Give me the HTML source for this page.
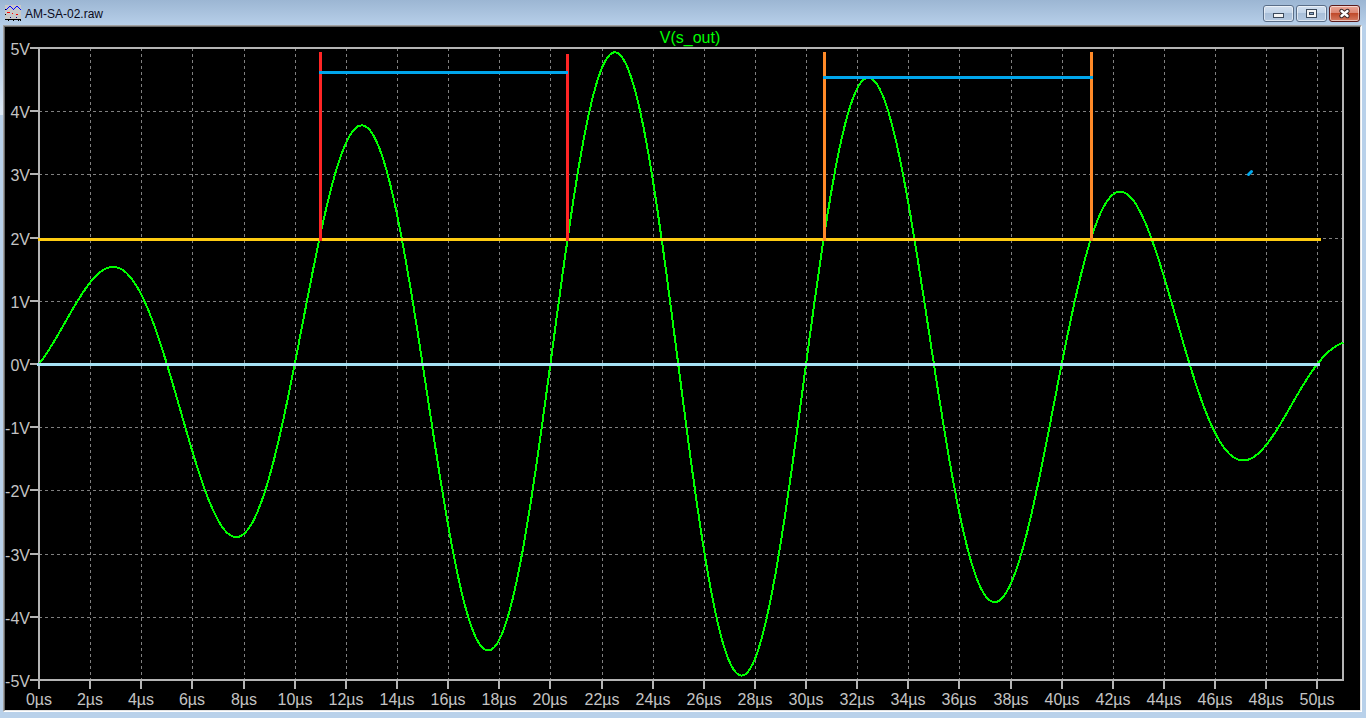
<!DOCTYPE html>
<html><head><meta charset="utf-8"><style>
html,body{margin:0;padding:0;}
body{width:1366px;height:718px;overflow:hidden;position:relative;background:#b9d1ea;font-family:"Liberation Sans",sans-serif;}
#tb{position:absolute;left:0;top:0;width:1366px;height:25px;background:linear-gradient(#9cb6d3,#b7cfe9);}
#ttl{position:absolute;left:25px;top:7px;font-size:12px;color:#0a0a20;white-space:nowrap;}
.btn{position:absolute;top:5px;height:15px;width:29px;border:1px solid #5a6e88;border-radius:3px;box-shadow:inset 0 0 0 1px rgba(255,255,255,0.55);
 background:linear-gradient(#d3e0ef 0%,#c2d4e9 45%,#a9bfd9 50%,#b4c9e1 100%);}
#cls{border-color:#5b1b1b;background:linear-gradient(#eaa696 0%,#dc8673 45%,#c04a2b 50%,#d47a62 100%);}
#client{position:absolute;left:3px;top:25px;width:1355px;height:683px;border-style:solid;border-width:2px;border-color:#a0a0a0 #ffffff #ffffff #a0a0a0;background:#000;}
svg{position:absolute;left:0;top:0;}
</style></head><body>
<div id="tb"></div>
<svg width="16" height="16" style="left:5px;top:5px" shape-rendering="crispEdges"><rect x="0" y="0" width="16" height="14" fill="#c8c8c8"/><rect x="0" y="4" width="1" height="1" fill="#000"/><rect x="1" y="4" width="1" height="1" fill="#0000ff"/><rect x="2" y="3" width="1" height="1" fill="#0000ff"/><rect x="3" y="2" width="1" height="1" fill="#0000ff"/><rect x="4" y="1" width="1" height="1" fill="#0000ff"/><rect x="5" y="1" width="1" height="1" fill="#0000ff"/><rect x="6" y="2" width="1" height="1" fill="#0000ff"/><rect x="7" y="3" width="1" height="1" fill="#0000ff"/><rect x="8" y="4" width="1" height="1" fill="#0000ff"/><rect x="9" y="3" width="1" height="1" fill="#0000ff"/><rect x="10" y="2" width="1" height="1" fill="#0000ff"/><rect x="11" y="1" width="1" height="1" fill="#0000ff"/><rect x="12" y="1" width="1" height="1" fill="#0000ff"/><rect x="13" y="2" width="1" height="1" fill="#0000ff"/><rect x="14" y="3" width="1" height="1" fill="#0000ff"/><rect x="15" y="4" width="1" height="1" fill="#0000ff"/><rect x="2" y="7" width="3" height="1" fill="#ff0000"/><rect x="7" y="8" width="1" height="1" fill="#ff0000"/><rect x="11" y="9" width="2" height="1" fill="#ff0000"/><rect x="0" y="9" width="1" height="1" fill="#000"/><rect x="5" y="12" width="1" height="1" fill="#000080"/><rect x="11" y="12" width="1" height="1" fill="#000080"/><rect x="0" y="14" width="16" height="1" fill="#000"/><rect x="3" y="15" width="1" height="1" fill="#000"/><rect x="8" y="15" width="1" height="1" fill="#000"/><rect x="13" y="15" width="1" height="1" fill="#000"/><rect x="15" y="15" width="1" height="1" fill="#000"/></svg>
<div id="ttl">AM-SA-02.raw</div>
<div class="btn" style="left:1263px"></div>
<div class="btn" style="left:1296px"></div>
<div class="btn" id="cls" style="left:1329px"></div>
<div style="position:absolute;left:0;top:60px;width:3px;height:55px;background:linear-gradient(#b9d1ea,#dfeaf5);"></div>
<div id="client"></div>
<div style="position:absolute;left:4px;top:26px;width:1357px;height:685px;border-style:solid;border-width:1px;border-color:#696969 #e3e3e3 #e3e3e3 #696969;box-sizing:border-box;"></div>
<svg width="110" height="20" style="left:1256px;top:3px" shape-rendering="crispEdges">
<rect x="17.5" y="10.5" width="10" height="4" rx="1" fill="#f4f4f4" stroke="#3c4a5c"/>
<rect x="50.5" y="6.5" width="10" height="8" rx="1" fill="none" stroke="#3c4a5c"/>
<rect x="51.5" y="7.5" width="8" height="6" fill="none" stroke="#f4f4f4" stroke-width="1"/>
<rect x="52.5" y="8.5" width="6" height="4" fill="none" stroke="#f4f4f4" stroke-width="1"/>
<rect x="53.5" y="9.5" width="4" height="2" fill="#8aa6c6" stroke="#3c4a5c"/>
</svg>
<svg width="16" height="14" style="left:1336px;top:6px">
<path d="M5.5,5 L11.5,10 M11.5,5 L5.5,10" stroke="#3a2828" stroke-width="4.4" stroke-linecap="round"/>
<path d="M5.5,5 L11.5,10 M11.5,5 L5.5,10" stroke="#ffffff" stroke-width="2.4" stroke-linecap="round"/>
</svg>
<svg width="1366" height="718" viewBox="0 0 1366 718">
<g stroke="#808080" stroke-width="1" shape-rendering="crispEdges" stroke-dasharray="3 3" id="gv">
<line x1="90.5" y1="48" x2="90.5" y2="679" />
<line x1="141.5" y1="48" x2="141.5" y2="679" />
<line x1="192.5" y1="48" x2="192.5" y2="679" />
<line x1="244.5" y1="48" x2="244.5" y2="679" />
<line x1="295.5" y1="48" x2="295.5" y2="679" />
<line x1="346.5" y1="48" x2="346.5" y2="679" />
<line x1="397.5" y1="48" x2="397.5" y2="679" />
<line x1="448.5" y1="48" x2="448.5" y2="679" />
<line x1="499.5" y1="48" x2="499.5" y2="679" />
<line x1="550.5" y1="48" x2="550.5" y2="679" />
<line x1="602.5" y1="48" x2="602.5" y2="679" />
<line x1="653.5" y1="48" x2="653.5" y2="679" />
<line x1="704.5" y1="48" x2="704.5" y2="679" />
<line x1="755.5" y1="48" x2="755.5" y2="679" />
<line x1="806.5" y1="48" x2="806.5" y2="679" />
<line x1="857.5" y1="48" x2="857.5" y2="679" />
<line x1="908.5" y1="48" x2="908.5" y2="679" />
<line x1="959.5" y1="48" x2="959.5" y2="679" />
<line x1="1011.5" y1="48" x2="1011.5" y2="679" />
<line x1="1062.5" y1="48" x2="1062.5" y2="679" />
<line x1="1113.5" y1="48" x2="1113.5" y2="679" />
<line x1="1164.5" y1="48" x2="1164.5" y2="679" />
<line x1="1215.5" y1="48" x2="1215.5" y2="679" />
<line x1="1266.5" y1="48" x2="1266.5" y2="679" />
<line x1="1317.5" y1="48" x2="1317.5" y2="679" />
<line x1="39" y1="111.5" x2="1342" y2="111.5" />
<line x1="39" y1="174.5" x2="1342" y2="174.5" />
<line x1="39" y1="238.5" x2="1342" y2="238.5" />
<line x1="39" y1="301.5" x2="1342" y2="301.5" />
<line x1="39" y1="427.5" x2="1342" y2="427.5" />
<line x1="39" y1="490.5" x2="1342" y2="490.5" />
<line x1="39" y1="554.5" x2="1342" y2="554.5" />
<line x1="39" y1="617.5" x2="1342" y2="617.5" />
</g>
<g fill="#b4b4b4" shape-rendering="crispEdges">
<rect x="38" y="47" width="1306" height="2"/>
<rect x="38" y="679" width="1306" height="2"/>
<rect x="38" y="47" width="2" height="634"/>
<rect x="1342" y="47" width="2" height="634"/>
<rect x="30" y="679" width="9" height="2"/>
<rect x="30" y="616" width="9" height="2"/>
<rect x="30" y="553" width="9" height="2"/>
<rect x="30" y="489" width="9" height="2"/>
<rect x="30" y="426" width="9" height="2"/>
<rect x="30" y="363" width="9" height="2"/>
<rect x="30" y="300" width="9" height="2"/>
<rect x="30" y="237" width="9" height="2"/>
<rect x="30" y="173" width="9" height="2"/>
<rect x="30" y="110" width="9" height="2"/>
<rect x="30" y="47" width="9" height="2"/>
<rect x="38" y="679" width="2" height="10"/>
<rect x="89" y="679" width="2" height="10"/>
<rect x="140" y="679" width="2" height="10"/>
<rect x="191" y="679" width="2" height="10"/>
<rect x="243" y="679" width="2" height="10"/>
<rect x="294" y="679" width="2" height="10"/>
<rect x="345" y="679" width="2" height="10"/>
<rect x="396" y="679" width="2" height="10"/>
<rect x="447" y="679" width="2" height="10"/>
<rect x="498" y="679" width="2" height="10"/>
<rect x="549" y="679" width="2" height="10"/>
<rect x="601" y="679" width="2" height="10"/>
<rect x="652" y="679" width="2" height="10"/>
<rect x="703" y="679" width="2" height="10"/>
<rect x="754" y="679" width="2" height="10"/>
<rect x="805" y="679" width="2" height="10"/>
<rect x="856" y="679" width="2" height="10"/>
<rect x="907" y="679" width="2" height="10"/>
<rect x="958" y="679" width="2" height="10"/>
<rect x="1010" y="679" width="2" height="10"/>
<rect x="1061" y="679" width="2" height="10"/>
<rect x="1112" y="679" width="2" height="10"/>
<rect x="1163" y="679" width="2" height="10"/>
<rect x="1214" y="679" width="2" height="10"/>
<rect x="1265" y="679" width="2" height="10"/>
<rect x="1316" y="679" width="2" height="10"/>
</g>
<polyline points="39.1,364.0 40.6,362.0 42.1,359.9 43.7,357.7 45.2,355.4 46.7,353.1 48.3,350.8 49.8,348.4 51.3,345.9 52.9,343.4 54.4,340.8 55.9,338.3 57.5,335.6 59.0,333.0 60.5,330.3 62.1,327.7 63.6,325.0 65.1,322.3 66.7,319.6 68.2,316.9 69.7,314.2 71.3,311.6 72.8,308.9 74.3,306.3 75.9,303.8 77.4,301.2 78.9,298.8 80.5,296.3 82.0,293.9 83.5,291.6 85.1,289.4 86.6,287.2 88.1,285.1 89.7,283.1 91.2,281.2 92.7,279.4 94.3,277.7 95.8,276.1 97.3,274.6 98.9,273.3 100.4,272.0 101.9,270.9 103.5,269.9 105.0,269.0 106.5,268.3 108.1,267.7 109.6,267.3 111.1,267.0 112.7,266.9 114.2,266.9 115.8,267.1 117.3,267.5 118.8,268.0 120.4,268.7 121.9,269.5 123.4,270.5 125.0,271.7 126.5,273.0 128.0,274.6 129.6,276.3 131.1,278.1 132.6,280.1 134.2,282.3 135.7,284.7 137.2,287.2 138.8,289.9 140.3,292.7 141.8,295.8 143.4,298.9 144.9,302.2 146.4,305.7 148.0,309.3 149.5,313.1 151.0,317.0 152.6,321.0 154.1,325.1 155.6,329.4 157.2,333.8 158.7,338.3 160.2,342.9 161.8,347.6 163.3,352.5 164.8,357.4 166.4,362.3 167.9,367.4 169.4,372.5 171.0,377.7 172.5,382.9 174.0,388.1 175.6,393.4 177.1,398.8 178.6,404.1 180.2,409.5 181.7,414.8 183.2,420.2 184.8,425.5 186.3,430.8 187.9,436.1 189.4,441.3 190.9,446.5 192.5,451.6 194.0,456.7 195.5,461.6 197.1,466.5 198.6,471.3 200.1,476.0 201.7,480.5 203.2,485.0 204.7,489.3 206.3,493.5 207.8,497.5 209.3,501.4 210.9,505.1 212.4,508.7 213.9,512.0 215.5,515.2 217.0,518.2 218.5,521.0 220.1,523.6 221.6,526.0 223.1,528.1 224.7,530.1 226.2,531.8 227.7,533.3 229.3,534.5 230.8,535.5 232.3,536.3 233.9,536.8 235.4,537.0 236.9,537.0 238.5,536.8 240.0,536.3 241.5,535.5 243.1,534.4 244.6,533.1 246.1,531.6 247.7,529.7 249.2,527.6 250.7,525.3 252.3,522.7 253.8,519.8 255.3,516.7 256.9,513.3 258.4,509.6 259.9,505.7 261.5,501.6 263.0,497.2 264.6,492.6 266.1,487.8 267.6,482.7 269.2,477.4 270.7,471.9 272.2,466.2 273.8,460.3 275.3,454.2 276.8,447.9 278.4,441.5 279.9,434.8 281.4,428.1 283.0,421.1 284.5,414.0 286.0,406.8 287.6,399.5 289.1,392.1 290.6,384.5 292.2,376.9 293.7,369.2 295.2,361.4 296.8,353.6 298.3,345.7 299.8,337.8 301.4,329.8 302.9,321.9 304.4,314.0 306.0,306.0 307.5,298.1 309.0,290.3 310.6,282.4 312.1,274.7 313.6,267.0 315.2,259.4 316.7,251.9 318.2,244.6 319.8,237.3 321.3,230.2 322.8,223.2 324.4,216.4 325.9,209.7 327.4,203.3 329.0,197.0 330.5,190.9 332.0,185.0 333.6,179.4 335.1,174.0 336.6,168.8 338.2,163.9 339.7,159.2 341.3,154.9 342.8,150.7 344.3,146.9 345.9,143.4 347.4,140.1 348.9,137.2 350.5,134.6 352.0,132.3 353.5,130.3 355.1,128.6 356.6,127.3 358.1,126.3 359.7,125.7 361.2,125.4 362.7,125.4 364.3,125.8 365.8,126.6 367.3,127.7 368.9,129.1 370.4,130.9 371.9,133.0 373.5,135.5 375.0,138.3 376.5,141.5 378.1,145.0 379.6,148.9 381.1,153.0 382.7,157.6 384.2,162.4 385.7,167.5 387.3,173.0 388.8,178.8 390.3,184.8 391.9,191.2 393.4,197.8 394.9,204.7 396.5,211.9 398.0,219.3 399.5,227.0 401.1,234.9 402.6,243.1 404.1,251.4 405.7,260.0 407.2,268.8 408.7,277.7 410.3,286.8 411.8,296.0 413.4,305.4 414.9,315.0 416.4,324.6 418.0,334.3 419.5,344.1 421.0,354.0 422.6,364.0 424.1,374.0 425.6,384.0 427.2,394.1 428.7,404.1 430.2,414.1 431.8,424.1 433.3,434.1 434.8,444.0 436.4,453.8 437.9,463.5 439.4,473.2 441.0,482.7 442.5,492.0 444.0,501.3 445.6,510.3 447.1,519.2 448.6,527.9 450.2,536.4 451.7,544.7 453.2,552.8 454.8,560.6 456.3,568.1 457.8,575.4 459.4,582.4 460.9,589.2 462.4,595.6 464.0,601.7 465.5,607.5 467.0,612.9 468.6,618.1 470.1,622.8 471.6,627.3 473.2,631.3 474.7,635.0 476.2,638.3 477.8,641.2 479.3,643.7 480.8,645.9 482.4,647.6 483.9,648.9 485.4,649.9 487.0,650.4 488.5,650.5 490.1,650.2 491.6,649.5 493.1,648.3 494.7,646.8 496.2,644.8 497.7,642.5 499.3,639.7 500.8,636.5 502.3,633.0 503.9,629.0 505.4,624.6 506.9,619.9 508.5,614.7 510.0,609.2 511.5,603.3 513.1,597.1 514.6,590.5 516.1,583.6 517.7,576.3 519.2,568.7 520.7,560.8 522.3,552.6 523.8,544.1 525.3,535.3 526.9,526.2 528.4,516.9 529.9,507.4 531.5,497.6 533.0,487.6 534.5,477.4 536.1,467.1 537.6,456.5 539.1,445.8 540.7,435.0 542.2,424.0 543.7,412.9 545.3,401.7 546.8,390.5 548.3,379.2 549.9,367.8 551.4,356.4 552.9,345.0 554.5,333.6 556.0,322.2 557.5,310.9 559.1,299.6 560.6,288.4 562.1,277.3 563.7,266.2 565.2,255.3 566.8,244.6 568.3,234.0 569.8,223.5 571.4,213.3 572.9,203.2 574.4,193.4 576.0,183.8 577.5,174.4 579.0,165.3 580.6,156.4 582.1,147.9 583.6,139.6 585.2,131.6 586.7,124.0 588.2,116.7 589.8,109.8 591.3,103.2 592.8,96.9 594.4,91.1 595.9,85.6 597.4,80.5 599.0,75.8 600.5,71.6 602.0,67.7 603.6,64.3 605.1,61.2 606.6,58.7 608.2,56.5 609.7,54.8 611.2,53.5 612.8,52.7 614.3,52.3 615.8,52.4 617.4,52.9 618.9,53.9 620.4,55.3 622.0,57.1 623.5,59.4 625.0,62.2 626.6,65.3 628.1,68.9 629.6,73.0 631.2,77.4 632.7,82.3 634.2,87.5 635.8,93.2 637.3,99.2 638.9,105.7 640.4,112.5 641.9,119.7 643.5,127.2 645.0,135.1 646.5,143.3 648.1,151.8 649.6,160.7 651.1,169.8 652.7,179.2 654.2,188.9 655.7,198.8 657.3,209.0 658.8,219.4 660.3,230.0 661.9,240.8 663.4,251.8 664.9,263.0 666.5,274.3 668.0,285.7 669.5,297.3 671.1,308.9 672.6,320.6 674.1,332.4 675.7,344.2 677.2,356.1 678.7,368.0 680.3,379.8 681.8,391.7 683.3,403.5 684.9,415.2 686.4,426.9 687.9,438.4 689.5,449.9 691.0,461.3 692.5,472.5 694.1,483.5 695.6,494.4 697.1,505.0 698.7,515.5 700.2,525.8 701.7,535.8 703.3,545.6 704.8,555.1 706.3,564.3 707.9,573.2 709.4,581.8 710.9,590.2 712.5,598.1 714.0,605.8 715.6,613.1 717.1,620.0 718.6,626.6 720.2,632.8 721.7,638.6 723.2,644.0 724.8,649.0 726.3,653.5 727.8,657.7 729.4,661.4 730.9,664.7 732.4,667.6 734.0,670.0 735.5,672.0 737.0,673.6 738.6,674.7 740.1,675.4 741.6,675.6 743.2,675.4 744.7,674.7 746.2,673.6 747.8,672.0 749.3,670.0 750.8,667.5 752.4,664.7 753.9,661.4 755.4,657.7 757.0,653.5 758.5,649.0 760.0,644.0 761.6,638.7 763.1,632.9 764.6,626.8 766.2,620.4 767.7,613.5 769.2,606.3 770.8,598.8 772.3,591.0 773.8,582.8 775.4,574.4 776.9,565.6 778.4,556.6 780.0,547.3 781.5,537.8 783.0,528.0 784.6,518.0 786.1,507.8 787.6,497.4 789.2,486.9 790.7,476.2 792.3,465.3 793.8,454.4 795.3,443.3 796.9,432.1 798.4,420.8 799.9,409.5 801.5,398.2 803.0,386.8 804.5,375.4 806.1,364.0 807.6,352.6 809.1,341.3 810.7,330.0 812.2,318.8 813.7,307.7 815.3,296.7 816.8,285.9 818.3,275.1 819.9,264.5 821.4,254.1 822.9,243.8 824.5,233.8 826.0,224.0 827.5,214.3 829.1,205.0 830.6,195.8 832.1,187.0 833.7,178.4 835.2,170.1 836.7,162.1 838.3,154.4 839.8,147.0 841.3,140.0 842.9,133.3 844.4,127.0 845.9,121.0 847.5,115.3 849.0,110.1 850.5,105.2 852.1,100.7 853.6,96.6 855.1,92.9 856.7,89.6 858.2,86.7 859.7,84.2 861.3,82.1 862.8,80.4 864.3,79.2 865.9,78.3 867.4,77.9 869.0,77.9 870.5,78.2 872.0,79.0 873.6,80.2 875.1,81.8 876.6,83.8 878.2,86.2 879.7,89.0 881.2,92.2 882.8,95.8 884.3,99.7 885.8,104.0 887.4,108.6 888.9,113.6 890.4,119.0 892.0,124.7 893.5,130.7 895.0,137.0 896.6,143.6 898.1,150.5 899.6,157.7 901.2,165.2 902.7,172.9 904.2,180.8 905.8,189.0 907.3,197.5 908.8,206.1 910.4,214.9 911.9,223.9 913.4,233.1 915.0,242.4 916.5,251.8 918.0,261.4 919.6,271.1 921.1,280.9 922.6,290.7 924.2,300.6 925.7,310.6 927.2,320.6 928.8,330.6 930.3,340.7 931.8,350.7 933.4,360.7 934.9,370.6 936.4,380.5 938.0,390.4 939.5,400.1 941.1,409.8 942.6,419.3 944.1,428.7 945.7,438.0 947.2,447.2 948.7,456.1 950.3,464.9 951.8,473.5 953.3,481.9 954.9,490.1 956.4,498.1 957.9,505.9 959.5,513.4 961.0,520.6 962.5,527.6 964.1,534.3 965.6,540.8 967.1,546.9 968.7,552.8 970.2,558.3 971.7,563.6 973.3,568.5 974.8,573.1 976.3,577.4 977.9,581.3 979.4,584.9 980.9,588.2 982.5,591.1 984.0,593.7 985.5,596.0 987.1,597.9 988.6,599.4 990.1,600.6 991.7,601.5 993.2,602.0 994.7,602.1 996.3,601.9 997.8,601.4 999.3,600.5 1000.9,599.3 1002.4,597.8 1003.9,595.9 1005.5,593.7 1007.0,591.2 1008.5,588.4 1010.1,585.2 1011.6,581.8 1013.1,578.1 1014.7,574.1 1016.2,569.8 1017.8,565.2 1019.3,560.4 1020.8,555.3 1022.4,550.0 1023.9,544.4 1025.4,538.6 1027.0,532.6 1028.5,526.4 1030.0,520.1 1031.6,513.5 1033.1,506.7 1034.6,499.8 1036.2,492.8 1037.7,485.6 1039.2,478.2 1040.8,470.8 1042.3,463.3 1043.8,455.6 1045.4,447.9 1046.9,440.1 1048.4,432.3 1050.0,424.4 1051.5,416.5 1053.0,408.6 1054.6,400.7 1056.1,392.8 1057.6,384.9 1059.2,377.0 1060.7,369.2 1062.2,361.4 1063.8,353.7 1065.3,346.1 1066.8,338.5 1068.4,331.1 1069.9,323.7 1071.4,316.5 1073.0,309.4 1074.5,302.4 1076.0,295.6 1077.6,289.0 1079.1,282.5 1080.6,276.1 1082.2,270.0 1083.7,264.1 1085.2,258.3 1086.8,252.7 1088.3,247.4 1089.8,242.3 1091.4,237.4 1092.9,232.7 1094.5,228.3 1096.0,224.1 1097.5,220.1 1099.1,216.4 1100.6,213.0 1102.1,209.7 1103.7,206.8 1105.2,204.1 1106.7,201.7 1108.3,199.5 1109.8,197.6 1111.3,196.0 1112.9,194.6 1114.4,193.4 1115.9,192.6 1117.5,192.0 1119.0,191.7 1120.5,191.6 1122.1,191.8 1123.6,192.2 1125.1,192.9 1126.7,193.8 1128.2,194.9 1129.7,196.3 1131.3,198.0 1132.8,199.8 1134.3,201.9 1135.9,204.2 1137.4,206.7 1138.9,209.5 1140.5,212.4 1142.0,215.5 1143.5,218.8 1145.1,222.3 1146.6,225.9 1148.1,229.7 1149.7,233.7 1151.2,237.8 1152.7,242.1 1154.3,246.5 1155.8,251.0 1157.3,255.6 1158.9,260.3 1160.4,265.2 1161.9,270.1 1163.5,275.1 1165.0,280.2 1166.6,285.3 1168.1,290.5 1169.6,295.7 1171.2,301.0 1172.7,306.3 1174.2,311.6 1175.8,317.0 1177.3,322.3 1178.8,327.6 1180.4,332.9 1181.9,338.2 1183.4,343.5 1185.0,348.7 1186.5,353.8 1188.0,359.0 1189.6,364.0 1191.1,369.0 1192.6,373.9 1194.2,378.7 1195.7,383.4 1197.2,388.0 1198.8,392.5 1200.3,396.9 1201.8,401.2 1203.4,405.4 1204.9,409.5 1206.4,413.4 1208.0,417.1 1209.5,420.8 1211.0,424.3 1212.6,427.6 1214.1,430.8 1215.6,433.9 1217.2,436.7 1218.7,439.5 1220.2,442.0 1221.8,444.4 1223.3,446.6 1224.8,448.7 1226.4,450.6 1227.9,452.3 1229.4,453.9 1231.0,455.3 1232.5,456.5 1234.0,457.5 1235.6,458.4 1237.1,459.2 1238.6,459.7 1240.2,460.1 1241.7,460.3 1243.3,460.4 1244.8,460.3 1246.3,460.1 1247.9,459.7 1249.4,459.2 1250.9,458.5 1252.5,457.7 1254.0,456.8 1255.5,455.7 1257.1,454.5 1258.6,453.1 1260.1,451.7 1261.7,450.1 1263.2,448.5 1264.7,446.7 1266.3,444.8 1267.8,442.9 1269.3,440.8 1270.9,438.7 1272.4,436.5 1273.9,434.2 1275.5,431.9 1277.0,429.5 1278.5,427.0 1280.1,424.5 1281.6,422.0 1283.1,419.4 1284.7,416.8 1286.2,414.2 1287.7,411.5 1289.3,408.8 1290.8,406.2 1292.3,403.5 1293.9,400.8 1295.4,398.2 1296.9,395.5 1298.5,392.9 1300.0,390.3 1301.5,387.7 1303.1,385.2 1304.6,382.7 1306.1,380.3 1307.7,377.9 1309.2,375.5 1310.7,373.2 1312.3,371.0 1313.8,368.8 1315.3,366.7 1316.9,364.7 1318.4,362.7 1320.0,360.8 1321.5,359.0 1323.0,357.3 1324.6,355.6 1326.1,354.1 1327.6,352.6 1329.2,351.2 1330.7,349.9 1332.2,348.7 1333.8,347.6 1335.3,346.5 1336.8,345.6 1338.4,344.8 1339.9,344.0 1341.4,343.3 1343.0,342.8 1343.0,342.7" fill="none" stroke="#00ff00" stroke-width="2" shape-rendering="crispEdges"/>
<g shape-rendering="crispEdges">
<rect x="37" y="363" width="1283" height="3" fill="#a5e1f4"/>
<rect x="38" y="238" width="1283" height="3" fill="#ffcc12"/>
<rect x="319" y="52" width="3" height="189" fill="#ff2525"/>
<rect x="566" y="54" width="3" height="187" fill="#ff2525"/>
<rect x="319" y="71" width="249" height="3" fill="#00a6ec"/>
<rect x="823" y="52" width="3" height="189" fill="#ff8a28"/>
<rect x="1090" y="52" width="3" height="189" fill="#ff8a28"/>
<rect x="823" y="76" width="270" height="3" fill="#00a6ec"/>
</g>
<line x1="1248.5" y1="174.5" x2="1251.5" y2="171.5" stroke="#00aaee" stroke-width="3" stroke-linecap="round"/>
<g font-size="16" fill="#c4c4c4">
<text x="30" y="687" text-anchor="end">-5V</text>
<text x="30" y="624" text-anchor="end">-4V</text>
<text x="30" y="561" text-anchor="end">-3V</text>
<text x="30" y="497" text-anchor="end">-2V</text>
<text x="30" y="434" text-anchor="end">-1V</text>
<text x="30" y="371" text-anchor="end">0V</text>
<text x="30" y="308" text-anchor="end">1V</text>
<text x="30" y="245" text-anchor="end">2V</text>
<text x="30" y="181" text-anchor="end">3V</text>
<text x="30" y="118" text-anchor="end">4V</text>
<text x="30" y="55" text-anchor="end">5V</text>
<text x="39" y="705" text-anchor="middle">0µs</text>
<text x="90" y="705" text-anchor="middle">2µs</text>
<text x="141" y="705" text-anchor="middle">4µs</text>
<text x="192" y="705" text-anchor="middle">6µs</text>
<text x="244" y="705" text-anchor="middle">8µs</text>
<text x="295" y="705" text-anchor="middle">10µs</text>
<text x="346" y="705" text-anchor="middle">12µs</text>
<text x="397" y="705" text-anchor="middle">14µs</text>
<text x="448" y="705" text-anchor="middle">16µs</text>
<text x="499" y="705" text-anchor="middle">18µs</text>
<text x="550" y="705" text-anchor="middle">20µs</text>
<text x="602" y="705" text-anchor="middle">22µs</text>
<text x="653" y="705" text-anchor="middle">24µs</text>
<text x="704" y="705" text-anchor="middle">26µs</text>
<text x="755" y="705" text-anchor="middle">28µs</text>
<text x="806" y="705" text-anchor="middle">30µs</text>
<text x="857" y="705" text-anchor="middle">32µs</text>
<text x="908" y="705" text-anchor="middle">34µs</text>
<text x="959" y="705" text-anchor="middle">36µs</text>
<text x="1011" y="705" text-anchor="middle">38µs</text>
<text x="1062" y="705" text-anchor="middle">40µs</text>
<text x="1113" y="705" text-anchor="middle">42µs</text>
<text x="1164" y="705" text-anchor="middle">44µs</text>
<text x="1215" y="705" text-anchor="middle">46µs</text>
<text x="1266" y="705" text-anchor="middle">48µs</text>
<text x="1317" y="705" text-anchor="middle">50µs</text>
</g>
<text x="690" y="43" text-anchor="middle" font-size="16" fill="#00ff00">V(s_out)</text>
</svg>
</body></html>
